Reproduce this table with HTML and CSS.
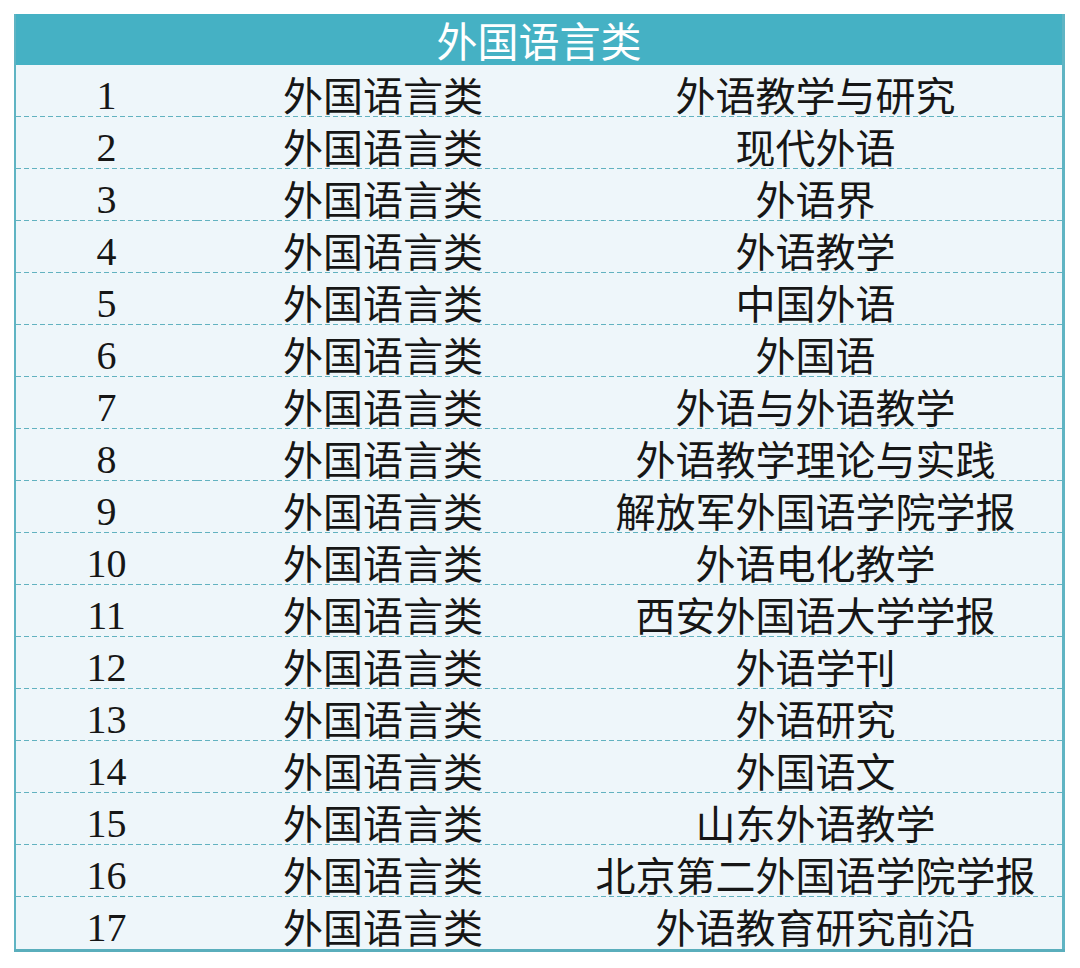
FILE: index.html
```html
<!DOCTYPE html>
<html lang="zh-CN">
<head>
<meta charset="utf-8">
<title>外国语言类</title>
<link rel="stylesheet" href="styles.css">
</head>
<body>
<table class="journal-table">
  <colgroup>
    <col class="col-num">
    <col class="col-cat">
    <col class="col-name">
  </colgroup>
  <thead>
    <tr><th colspan="3">外国语言类</th></tr>
  </thead>
  <tbody>
    <tr><td class="num">1</td><td>外国语言类</td><td>外语教学与研究</td></tr>
    <tr><td class="num">2</td><td>外国语言类</td><td>现代外语</td></tr>
    <tr><td class="num">3</td><td>外国语言类</td><td>外语界</td></tr>
    <tr><td class="num">4</td><td>外国语言类</td><td>外语教学</td></tr>
    <tr><td class="num">5</td><td>外国语言类</td><td>中国外语</td></tr>
    <tr><td class="num">6</td><td>外国语言类</td><td>外国语</td></tr>
    <tr><td class="num">7</td><td>外国语言类</td><td>外语与外语教学</td></tr>
    <tr><td class="num">8</td><td>外国语言类</td><td>外语教学理论与实践</td></tr>
    <tr><td class="num">9</td><td>外国语言类</td><td>解放军外国语学院学报</td></tr>
    <tr><td class="num">10</td><td>外国语言类</td><td>外语电化教学</td></tr>
    <tr><td class="num">11</td><td>外国语言类</td><td>西安外国语大学学报</td></tr>
    <tr><td class="num">12</td><td>外国语言类</td><td>外语学刊</td></tr>
    <tr><td class="num">13</td><td>外国语言类</td><td>外语研究</td></tr>
    <tr><td class="num">14</td><td>外国语言类</td><td>外国语文</td></tr>
    <tr><td class="num">15</td><td>外国语言类</td><td>山东外语教学</td></tr>
    <tr><td class="num">16</td><td>外国语言类</td><td>北京第二外国语学院学报</td></tr>
    <tr><td class="num">17</td><td>外国语言类</td><td>外语教育研究前沿</td></tr>
  </tbody>
</table>
</body>
</html>
```

FILE: styles.css
```css
html, body {
  margin: 0;
  padding: 0;
  background: #ffffff;
}

body {
  padding: 14px 0 0 14px;
  font-family: "Liberation Serif", "Noto Sans CJK SC", serif;
}

.journal-table {
  width: 1051px;
  border-collapse: collapse;
  table-layout: fixed;
  background: #eef6fa;
  border-left: 2px solid #5fb4c3;
  border-right: 3px solid #5fb4c3;
  border-bottom: 3px solid #5aaebc;
}

.col-num { width: 182px; }
.col-cat { width: 372px; }

.journal-table th {
  height: 51px;
  padding: 0;
  background: #45b1c4;
  color: #ffffff;
  font-family: "Noto Sans CJK SC", sans-serif;
  font-weight: 400;
  font-size: 41px;
  line-height: 1;
  vertical-align: middle;
  text-align: center;
}

.journal-table td {
  height: 47px;
  padding: 5px 0 0 0;
  color: #161616;
  font-family: "Noto Sans CJK SC", sans-serif;
  font-size: 40px;
  line-height: 1;
  vertical-align: middle;
  text-align: center;
  white-space: nowrap;
  background-image: linear-gradient(to right, #62b2c0 5px, transparent 5px);
  background-size: 8px 1px;
  background-position: left bottom;
  background-repeat: repeat-x;
}

.journal-table tr:last-child td {
  background-image: none;
}

.journal-table td.num {
  height: 42px;
  padding-top: 10px;
  font-family: "Liberation Serif", serif;
  font-size: 40px;
}
```
